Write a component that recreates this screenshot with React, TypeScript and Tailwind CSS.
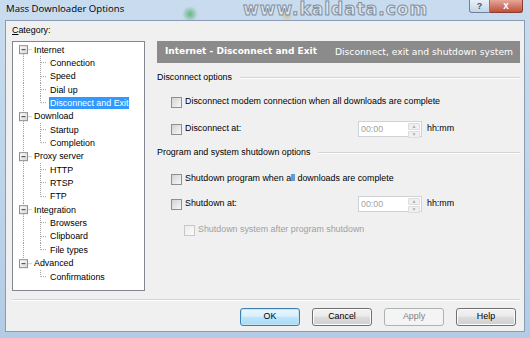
import React from "react";

const TREE = [
  { label: "Internet", children: ["Connection", "Speed", "Dial up", "Disconnect and Exit"] },
  { label: "Download", children: ["Startup", "Completion"] },
  { label: "Proxy server", children: ["HTTP", "RTSP", "FTP"] },
  { label: "Integration", children: ["Browsers", "Clipboard", "File types"] },
  { label: "Advanced", children: ["Confirmations"] },
];

const ROW_H = 13.35;
const C = ROW_H / 2;

const RootLines = ({ first, last }: { first: boolean; last: boolean }) => (
  <svg width={20} height={ROW_H} viewBox={`0 0 20 ${ROW_H}`} className="shrink-0">
    {!first && <line x1={10.5} y1={0} x2={10.5} y2={C - 4} stroke="#a0a0a0" strokeDasharray="1 1" />}
    {!last && <line x1={10.5} y1={C + 4} x2={10.5} y2={ROW_H} stroke="#a0a0a0" strokeDasharray="1 1" />}
    <line x1={14.5} y1={C} x2={19} y2={C} stroke="#a0a0a0" strokeDasharray="1 1" />
    <defs>
      <linearGradient id="bx" x1="0" y1="0" x2="1" y2="1">
        <stop offset="0" stopColor="#ffffff" />
        <stop offset="1" stopColor="#d6d6d6" />
      </linearGradient>
    </defs>
    <rect x={6.5} y={C - 4} width={8} height={8} fill="url(#bx)" stroke="#8f8f8f" />
    <line x1={8.5} y1={C} x2={12.5} y2={C} stroke="#3a3a3a" />
  </svg>
);

const ChildLines = ({ rootLine, lastChild }: { rootLine: boolean; lastChild: boolean }) => (
  <svg width={36} height={ROW_H} viewBox={`0 0 36 ${ROW_H}`} className="shrink-0">
    {rootLine && <line x1={10.5} y1={0} x2={10.5} y2={ROW_H} stroke="#a0a0a0" strokeDasharray="1 1" />}
    <line x1={27.5} y1={0} x2={27.5} y2={lastChild ? C : ROW_H} stroke="#a0a0a0" strokeDasharray="1 1" />
    <line x1={28} y1={C} x2={34} y2={C} stroke="#a0a0a0" strokeDasharray="1 1" />
  </svg>
);

const Tree = () => (
  <div className="h-[250px] border border-[#828790] bg-white pt-[1px]">
    {TREE.map((node, i) => {
      const lastRoot = i === TREE.length - 1;
      return (
        <div key={node.label}>
          <div className="flex h-[13.35px] items-center">
            <RootLines first={i === 0} last={lastRoot} />
            <span className="px-[1px] leading-[12px]">{node.label}</span>
          </div>
          {node.children.map((c, j) => {
            const selected = c === "Disconnect and Exit";
            return (
              <div key={c} className="flex h-[13.35px] items-center">
                <ChildLines rootLine={!lastRoot} lastChild={j === node.children.length - 1} />
                <span
                  className={
                    selected
                      ? "bg-[#3399ff] px-[1px] leading-[12px] text-white"
                      : "px-[1px] leading-[12px]"
                  }
                >
                  {c}
                </span>
              </div>
            );
          })}
        </div>
      );
    })}
  </div>
);

const Check = ({ disabled }: { disabled?: boolean }) => (
  <span
    className={
      disabled
        ? "block h-[11px] w-[11px] shrink-0 border border-[#c8c8c8] bg-[linear-gradient(135deg,#ececec,#fbfbfb)]"
        : "block h-[11px] w-[11px] shrink-0 border border-[#8e8f8f] bg-[linear-gradient(135deg,#d3d3d3,#f7f7f7)]"
    }
  />
);

const Group = ({ title }: { title: string }) => (
  <div className="flex h-[14px] items-center">
    <span className="whitespace-nowrap">{title}</span>
    <div className="ml-[8px] h-[2px] flex-1 border-t border-b border-t-[#d5d5d5] border-b-white" />
  </div>
);

const Spin = () => (
  <div className="flex h-[16px] w-[64px] border border-[#cfd2d6] bg-white">
    <span className="flex-1 pl-[2px] leading-[14px] text-[#a3a3a3]">00:00</span>
    <div className="flex w-[14px] flex-col gap-[1px] p-[1px]">
      <div className="flex flex-1 items-center justify-center rounded-[1px] border border-[#dcdcdc] bg-[#f0f0f0] text-[5px] leading-none text-[#b0b0b0]">
        ▲
      </div>
      <div className="flex flex-1 items-center justify-center rounded-[1px] border border-[#dcdcdc] bg-[#f0f0f0] text-[5px] leading-none text-[#b0b0b0]">
        ▼
      </div>
    </div>
  </div>
);

const CheckRow = ({ label }: { label: string }) => (
  <div className="flex h-[14px] items-center pl-[14px]">
    <Check />
    <span className="ml-[3px] whitespace-nowrap">{label}</span>
  </div>
);

const TimeRow = ({ label }: { label: string }) => (
  <div className="flex h-[16px] items-center pl-[14px]">
    <Check />
    <span className="ml-[3px] w-[173px] whitespace-nowrap">{label}</span>
    <Spin />
    <span className="ml-[5px]">hh:mm</span>
  </div>
);

const Btn = ({ label, kind }: { label: string; kind?: "default" | "disabled" }) => {
  const base = "flex h-[18px] w-[60px] items-center justify-center rounded-[3px] border";
  const cls =
    kind === "default"
      ? "border-[#3c7fb1] bg-[linear-gradient(180deg,#eaf6fd_0%,#d9f0fc_45%,#bee6fd_50%,#a7d9f5_100%)] shadow-[inset_0_0_0_1px_#c4e5f6]"
      : kind === "disabled"
      ? "border-[#adb2b5] bg-[#f4f4f4] text-[#838383]"
      : "border-[#707070] bg-[linear-gradient(180deg,#f2f2f2_0%,#ebebeb_45%,#dddddd_50%,#cfcfcf_100%)] shadow-[inset_0_0_0_1px_#fcfcfc]";
  return <div className={`${base} ${cls}`}>{label}</div>;
};

export default function App() {
  return (
    <div className="relative flex h-[338px] w-[530px] flex-col overflow-hidden bg-[radial-gradient(circle_at_190px_14px,rgba(70,170,90,0.75)_0,rgba(70,170,90,0)_8px),radial-gradient(circle_at_287px_15px,rgba(220,170,80,0.6)_0,rgba(220,170,80,0)_6px),linear-gradient(180deg,#c9dcef_0%,#bed3e9_60%,#b3cbe5_100%)] font-['Liberation_Sans',Arial,sans-serif] text-[8.9px] text-black">
      {/* title bar */}
      <div className="flex h-[20px] shrink-0 items-start justify-between">
        <span className="pl-[6px] pt-[2px] font-['Open_Sans',sans-serif] text-[9.6px] leading-[14px] text-black">
          Mass Downloader Options
        </span>
        <div className="mr-[7px] flex">
          <div className="flex h-[13px] w-[21px] items-center justify-center rounded-bl-[3px] border border-t-0 border-[#6f8298] bg-[linear-gradient(180deg,#e8f0f8,#c3d5e8)] text-[9px] font-bold leading-none text-[#4a5561]">
            ?
          </div>
          <div className="flex h-[13px] w-[33px] items-center justify-center rounded-br-[3px] border border-t-0 border-l-0 border-[#8a3b32] bg-[linear-gradient(180deg,#e6a899_0%,#d27a68_50%,#c44f3d_100%)] text-[10px] font-bold leading-none text-white">
            x
          </div>
        </div>
      </div>

      {/* watermark */}
      <span className="absolute left-[243px] top-[0px] font-['DejaVu_Sans',sans-serif] text-[17px] font-bold leading-[19px] tracking-[1px] text-[#dfe7ef] [-webkit-text-stroke:1px_#8390a0]">
        www.kaldata.com
      </span>

      {/* client area */}
      <div className="mx-[5px] mb-[6px] flex flex-1 flex-col border border-[#8a9cb3] bg-[#f0f0f0]">
        <div className="flex gap-x-[12px] pl-[6px] pt-[3px]">
          <div className="flex w-[133px] flex-col">
            <div className="mb-[4px] h-[13px] leading-[13px]">
              <span className="underline">C</span>ategory:
            </div>
            <Tree />
          </div>

          <div className="flex w-[363px] flex-col pt-[17px]">
            <div className="flex h-[22px] items-center justify-between bg-[#8b8b8b] pl-[8px] pr-[7px] font-['DejaVu_Sans',sans-serif] text-white">
              <span className="text-[9px] font-bold">Internet - Disconnect and Exit</span>
              <span className="text-[9.2px]">Disconnect, exit and shutdown system</span>
            </div>
            <div className="mt-[8px]">
              <Group title="Disconnect options" />
            </div>
            <div className="mt-[10px]">
              <CheckRow label="Disconnect modem connection when all downloads are complete" />
            </div>
            <div className="mt-[12px]">
              <TimeRow label="Disconnect at:" />
            </div>
            <div className="mt-[9px]">
              <Group title="Program and system shutdown options" />
            </div>
            <div className="mt-[12px]">
              <CheckRow label="Shutdown program when all downloads are complete" />
            </div>
            <div className="mt-[10px]">
              <TimeRow label="Shutdown at:" />
            </div>
            <div className="mt-[11px] flex h-[14px] items-center pl-[27px]">
              <Check disabled />
              <span className="ml-[3px] whitespace-nowrap text-[#a0a0a0]">Shutdown system after program shutdown</span>
            </div>
          </div>
        </div>

        <div className="ml-[6px] mt-[8px] h-[2px] w-[508px] border-t border-b border-t-[#d5d5d5] border-b-white" />

        <div className="mt-[7px] flex justify-end gap-[12px] pr-[8px]">
          <Btn label="OK" kind="default" />
          <Btn label="Cancel" />
          <Btn label="Apply" kind="disabled" />
          <Btn label="Help" />
        </div>
      </div>
    </div>
  );
}
